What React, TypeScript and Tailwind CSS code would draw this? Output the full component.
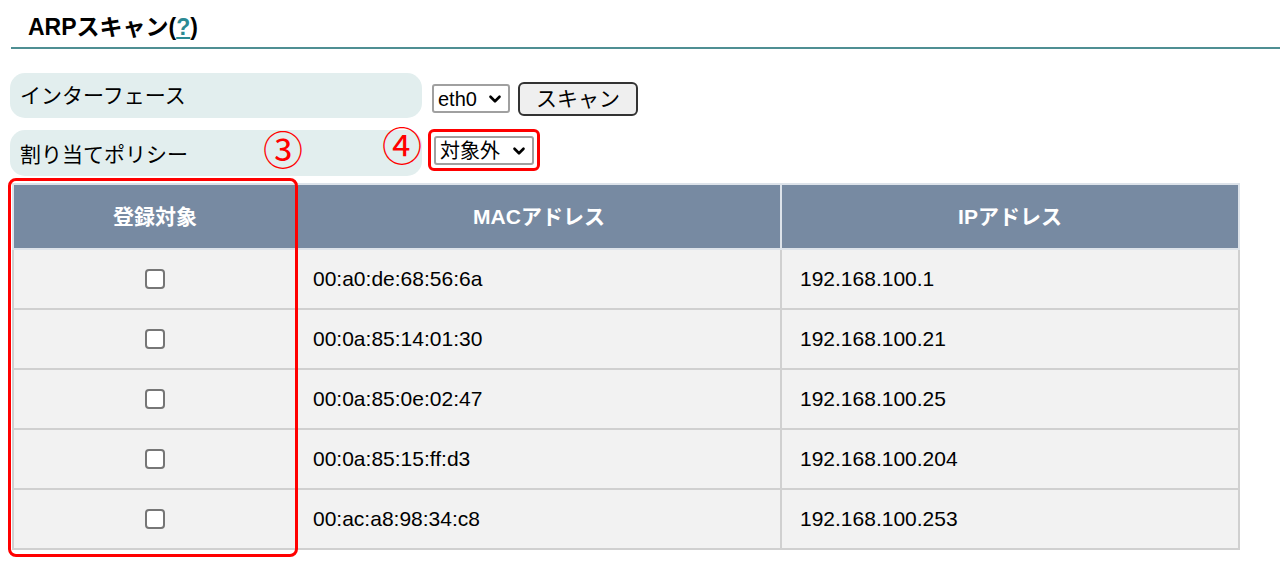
import { ChevronDown } from "lucide-react"

const rows = [
    { mac: "00:a0:de:68:56:6a", ip: "192.168.100.1" },
    { mac: "00:0a:85:14:01:30", ip: "192.168.100.21" },
    { mac: "00:0a:85:0e:02:47", ip: "192.168.100.25" },
    { mac: "00:0a:85:15:ff:d3", ip: "192.168.100.204" },
    { mac: "00:ac:a8:98:34:c8", ip: "192.168.100.253" },
]

function FakeSelect({ label, className }: { label: string; className: string }) {
    return (
        <div
            className={`flex items-center justify-between border-2 border-[#a0a0a0] rounded-[3px] bg-white pl-[4px] pr-[4px] text-[20px] leading-none text-black ${className}`}
        >
            <span>{label}</span>
            <ChevronDown size={18} strokeWidth={3.5} className="text-black" />
        </div>
    )
}

export default function App() {
    return (
        <div
            className="w-[1280px] h-[563px] bg-white overflow-hidden relative"
            style={{ fontFamily: '"Liberation Sans", "Noto Sans CJK JP", sans-serif' }}
        >
            {/* Title */}
            <div className="pl-[11px] pt-[13px]">
                <h1 className="pl-[17px] text-[23px] font-bold text-black leading-[28px]">
                    ARPスキャン(<span className="text-[#2b8a94] underline">?</span>)
                </h1>
                <div className="mt-[6px] h-[2px] bg-[#4f8f93]" />
            </div>

            {/* Settings rows */}
            <div className="pl-[10px] pt-[24px] flex flex-col gap-[12px]">
                <div className="flex items-center">
                    <div className="w-[412px] h-[45px] rounded-[15px] bg-[#e2eeee] flex items-center pl-[10px] text-[21px] text-black">
                        インターフェース
                    </div>
                    <div className="flex items-center gap-[8px] ml-[10px] mt-[6px]">
                        <FakeSelect label="eth0" className="w-[78px] h-[29px]" />
                        <button className="w-[120px] h-[34px] border-2 border-[#333] rounded-[6px] bg-[#efefef] text-[21px] text-black leading-none">
                            スキャン
                        </button>
                    </div>
                </div>
                <div className="flex items-center">
                    <div className="w-[412px] h-[46px] rounded-[15px] bg-[#e2eeee] flex items-center pl-[10px] pt-[4px] text-[21px] text-black">
                        割り当てポリシー
                    </div>
                    <div className="ml-[6px] -mt-[6px] border-[3px] border-[#f00] rounded-[6px] p-[3px] pt-[4px]">
                        <FakeSelect label="対象外" className="w-[100px] h-[29px]" />
                    </div>
                </div>
            </div>

            {/* Table */}
            <div className="pl-[12px] pt-[7px]">
                <table className="border-collapse w-[1226px] table-fixed">
                    <colgroup>
                        <col className="w-[284px]" />
                        <col className="w-[484px]" />
                        <col className="w-[458px]" />
                    </colgroup>
                    <thead>
                        <tr className="h-[65px] bg-[#778aa2]">
                            {["登録対象", "MACアドレス", "IPアドレス"].map((h) => (
                                <th
                                    key={h}
                                    className="border-2 border-[#dde3ea] text-white font-bold text-[21px] text-center"
                                >
                                    {h}
                                </th>
                            ))}
                        </tr>
                    </thead>
                    <tbody>
                        {rows.map((r) => (
                            <tr key={r.mac} className="h-[60px] bg-[#f2f2f2]">
                                <td className="border-2 border-[#d0d0d0]">
                                    <div className="mx-auto w-[20px] h-[20px] border-2 border-[#767676] rounded-[4px] bg-white" />
                                </td>
                                <td className="border-2 border-[#d0d0d0] pl-[15px] text-[21px] text-black">
                                    {r.mac}
                                </td>
                                <td className="border-2 border-[#d0d0d0] pl-[18px] text-[21px] text-black">
                                    {r.ip}
                                </td>
                            </tr>
                        ))}
                    </tbody>
                </table>
            </div>

            {/* Annotations */}
            <div className="absolute left-[8px] top-[178px] w-[290px] h-[379px] border-[3px] border-[#f00] rounded-[8px] pointer-events-none" />
            <div className="absolute left-[263px] top-[131px] text-[40px] leading-none text-[#f00]">③</div>
            <div className="absolute left-[382px] top-[127px] text-[40px] leading-none text-[#f00]">④</div>
        </div>
    )
}
